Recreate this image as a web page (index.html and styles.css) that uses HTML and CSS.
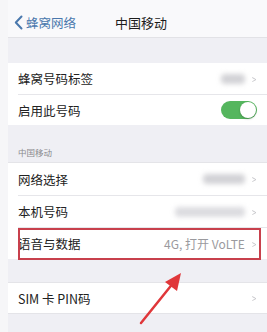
FILE: index.html
```html
<html>

<head>
	<title>中国移动</title>
	<link rel="stylesheet" href="styles.css">
</head>

<body>
	<div class="screen">
		<div class="navbar">
			<span class="back">
				<svg width="9" height="15" viewBox="0 0 9 15"><path d="M7.5 1.5 L1.8 7.5 L7.5 13.5" fill="none" stroke="#4a78ad" stroke-width="2" stroke-linecap="round" stroke-linejoin="round"/></svg>
				蜂窝网络
			</span>
			<span class="title">中国移动</span>
		</div>

		<div class="gap gap-top"></div>

		<div class="group">
			<div class="row first">
				<span class="label">蜂窝号码标签</span>
				<span class="value"><span class="blur b1"></span><span class="chev">&gt;</span></span>
			</div>
			<div class="row second">
				<span class="label">启用此号码</span>
				<span class="toggle"><span class="knob"></span></span>
			</div>
		</div>

		<div class="gap gap-header"><span class="header">中国移动</span></div>

		<div class="group">
			<div class="row third">
				<span class="label">网络选择</span>
				<span class="value"><span class="blur b2"></span><span class="chev">&gt;</span></span>
			</div>
			<div class="row fourth">
				<span class="label">本机号码</span>
				<span class="value"><span class="blur b3"></span><span class="chev">&gt;</span></span>
			</div>
			<div class="row fifth">
				<span class="label">语音与数据</span>
				<span class="value">4G, 打开 VoLTE<span class="chev">&gt;</span></span>
			</div>
		</div>

		<div class="gap gap-mid"></div>

		<div class="group">
			<div class="row sixth">
				<span class="label">SIM 卡 PIN码</span>
				<span class="value"><span class="chev">&gt;</span></span>
			</div>
		</div>

		<div class="gap gap-bottom"></div>

		<div class="highlight"></div>
		<svg class="arrow" width="267" height="332" viewBox="0 0 267 332">
			<line x1="141" y1="323" x2="174" y2="282" stroke="#e0373a" stroke-width="2.5" stroke-linecap="round"/>
			<polygon points="181,273 177,291 165,282" fill="#e0373a"/>
		</svg>
	</div>
</body>

</html>
```

FILE: styles.css
```css
* {
	box-sizing: border-box;
	margin: 0;
	padding: 0;
}

body {
	background: #f6f6f8;
	font-family: "Noto Sans CJK SC", "Liberation Sans", sans-serif;
}

.screen {
	position: relative;
	width: 267px;
	height: 332px;
	padding-left: 8px;
	background: #f6f6f8;
	overflow: hidden;
}

.navbar {
	height: 38px;
	background: #f9f9fb;
	border-bottom: 1px solid #e2e2e6;
	display: flex;
	align-items: center;
	padding-top: 7px;
	font-size: 12.5px;
}

.back {
	display: flex;
	align-items: center;
	gap: 3px;
	color: #4a78ad;
	padding-left: 6px;
	width: 107px;
}

.title {
	color: #1c1c1c;
	font-size: 13px;
}

.gap {
	background: #efeff4;
}

.gap-top {
	height: 25px;
}

.gap-header {
	height: 38px;
	display: flex;
	align-items: flex-end;
	padding: 0 0 4px 10px;
	border-bottom: 1px solid #e4e4e8;
}

.header {
	font-size: 8.5px;
	color: #8a8a8e;
}

.gap-mid {
	height: 24px;
	border-bottom: 1px solid #e4e4e8;
}

.gap-bottom {
	height: 20px;
	border-top: 1px solid #e4e4e8;
}

.group {
	background: #ffffff;
}

.row {
	display: flex;
	align-items: center;
	justify-content: space-between;
	margin-left: 10px;
	padding-right: 10px;
	font-size: 12.5px;
	color: #222222;
	border-bottom: 1px solid #e6e6ea;
}

.row:last-child {
	border-bottom: none;
}

.first { height: 32px; }
.second { height: 30px; }
.third { height: 33px; }
.fourth { height: 32px; }
.fifth { height: 31px; }
.sixth { height: 30px; }

.value {
	display: flex;
	align-items: center;
	color: #9a9a9e;
	font-size: 12px;
}

.chev {
	color: #c4c4c8;
	font-size: 11px;
	margin-left: 6px;
	transform: scaleX(0.7);
}

.blur {
	display: inline-block;
	height: 10px;
	background: #d2d2d6;
	filter: blur(2.5px);
	border-radius: 4px;
}

.b1 { width: 24px; }
.b2 { width: 42px; }
.b3 { width: 70px; background: #dcdce0; }

.toggle {
	width: 36px;
	height: 18px;
	border-radius: 9px;
	background: #55b65e;
	display: flex;
	justify-content: flex-end;
	align-items: center;
	padding: 1px;
}

.knob {
	width: 16px;
	height: 16px;
	border-radius: 50%;
	background: #ffffff;
	box-shadow: 0 1px 2px rgba(0, 0, 0, 0.25);
}

.highlight {
	position: absolute;
	left: 18px;
	top: 228px;
	width: 243px;
	height: 32px;
	border: 2px solid #c8404c;
}

.arrow {
	position: absolute;
	left: 0;
	top: 0;
}
```
